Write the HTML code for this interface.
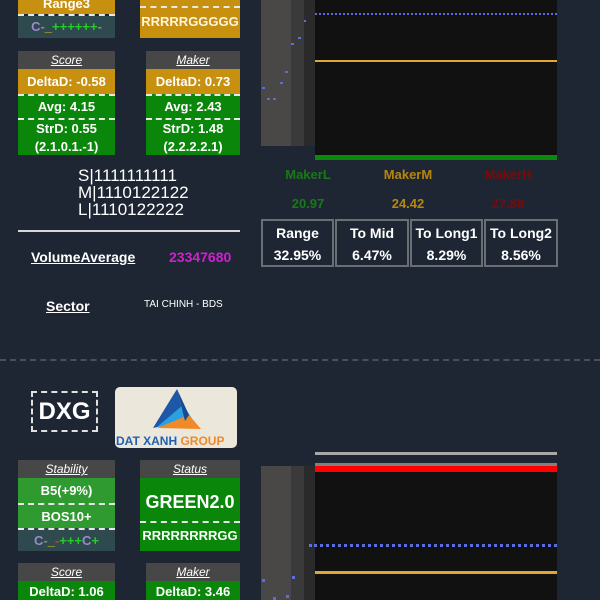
<!DOCTYPE html>
<html><head><meta charset="utf-8"><style>
*{margin:0;padding:0;box-sizing:border-box}
html,body{width:600px;height:600px;overflow:hidden}
body{background:#1f2633;font-family:"Liberation Sans",Arial,sans-serif;color:#fff;position:relative}
.a{position:absolute}
.c{position:absolute;text-align:center;font-weight:bold;font-size:13px;color:#fff}
.hd{background:#474747;font-style:italic;text-decoration:underline;height:18px;line-height:18px;font-size:12px;font-weight:normal}
.gold{background:#c8900f}
.gr{background:#0a870a}
.lg{background:#2f9a2f}
.tl{background:#2f4a4e}
.dash{border-top:2px dashed #e8e8e8}
.cell{position:absolute;top:219px;height:48px;border:2px solid #6a6e75;text-align:center;font-weight:bold;font-size:14px;line-height:22px;padding-top:1px}
</style></head><body>

<div class="c gold" style="left:18px;top:0;width:97px;height:14px;line-height:8px">Range3</div>
<div class="a dash" style="left:18px;top:14px;width:97px"></div>
<div class="c tl" style="left:18px;top:16px;width:97px;height:22px;line-height:22px"><span style="color:#9a8ac8">C</span><span style="color:#888">-</span><span style="color:#e0c020">_</span><span style="color:#20d020">++++++</span><span style="color:#888">-</span></div>

<div class="c gold" style="left:140px;top:0;width:100px;height:38px;line-height:44px;color:#fff5e0">RRRRRGGGGG</div>
<div class="a dash" style="left:140px;top:6px;width:100px"></div>

<div class="c" style="left:18px;top:51px;width:97px;height:102px">
<div class="hd">Score</div>
<div class="gold" style="height:25px;line-height:25px">DeltaD: -0.58</div>
<div class="gr dash" style="height:24px;line-height:22px">Avg: 4.15</div>
<div class="gr dash" style="height:37px;line-height:18px">StrD: 0.55<br>(2.1.0.1.-1)</div>
</div>
<div class="c" style="left:146px;top:51px;width:94px;height:102px">
<div class="hd">Maker</div>
<div class="gold" style="height:25px;line-height:25px">DeltaD: 0.73</div>
<div class="gr dash" style="height:24px;line-height:22px">Avg: 2.43</div>
<div class="gr dash" style="height:37px;line-height:18px">StrD: 1.48<br>(2.2.2.2.1)</div>
</div>

<div class="a" style="left:78px;top:167px;font-size:17px;line-height:17px">S|1111111111<br>M|1110122122<br>L|1110122222</div>
<div class="a" style="left:18px;top:230px;width:222px;height:2px;background:#d8d8d8"></div>
<div class="a" style="left:31px;top:249px;font-size:14px;font-weight:bold;text-decoration:underline">VolumeAverage</div>
<div class="a" style="left:169px;top:249px;font-size:14px;font-weight:bold;color:#d020d0">23347680</div>
<div class="a" style="left:46px;top:298px;font-size:14px;font-weight:bold;text-decoration:underline">Sector</div>
<div class="a" style="left:144px;top:299px;font-size:10px">TAI CHINH - BDS</div>

<div class="a" style="left:261px;top:0;width:30px;height:146px;background:#4a4847"></div>
<div class="a" style="left:291px;top:0;width:13px;height:146px;background:#3a3a3a"></div>
<div class="a" style="left:304px;top:0;width:11px;height:146px;background:#2a2a2a"></div>
<div class="a" style="left:315px;top:0;width:242px;height:155px;background:#111"></div>
<div class="a" style="left:315px;top:13px;width:242px;border-top:2px dotted #5a6ee0"></div>
<div class="a" style="left:315px;top:60px;width:242px;height:2px;background:#e0a830"></div>
<div class="a" style="left:315px;top:155px;width:242px;height:5px;background:#0a8a0a"></div>
<div class="a" style="left:262px;top:87px;width:3px;height:2px;background:#5a6ee0"></div>
<div class="a" style="left:267px;top:98px;width:3px;height:2px;background:#5a6ee0"></div>
<div class="a" style="left:273px;top:98px;width:3px;height:2px;background:#5a6ee0"></div>
<div class="a" style="left:280px;top:82px;width:3px;height:2px;background:#5a6ee0"></div>
<div class="a" style="left:285px;top:71px;width:3px;height:2px;background:#5a6ee0"></div>
<div class="a" style="left:291px;top:43px;width:3px;height:2px;background:#5a6ee0"></div>
<div class="a" style="left:298px;top:37px;width:3px;height:2px;background:#5a6ee0"></div>
<div class="a" style="left:304px;top:20px;width:2px;height:2px;background:#5a6ee0"></div>

<div class="c" style="left:268px;top:167px;width:80px;color:#167a16">MakerL</div>
<div class="c" style="left:368px;top:167px;width:80px;color:#b8860b">MakerM</div>
<div class="c" style="left:468px;top:167px;width:80px;color:#7a0a0a">MakerH</div>
<div class="c" style="left:268px;top:196px;width:80px;color:#167a16">20.97</div>
<div class="c" style="left:368px;top:196px;width:80px;color:#b8860b">24.42</div>
<div class="c" style="left:468px;top:196px;width:80px;color:#7a0a0a">27.88</div>

<div class="cell" style="left:261px;width:73px">Range<br>32.95%</div>
<div class="cell" style="left:335px;width:74px">To Mid<br>6.47%</div>
<div class="cell" style="left:410px;width:73px">To Long1<br>8.29%</div>
<div class="cell" style="left:484px;width:74px">To Long2<br>8.56%</div>

<div class="a" style="left:0;top:359px;width:600px;border-top:2px dashed #4a505a"></div>

<div class="a" style="left:31px;top:391px;width:67px;height:41px;border:2px dashed #e0e0e0;text-align:center;font-size:24px;font-weight:bold;line-height:37px">DXG</div>
<div class="a" style="left:115px;top:387px;width:122px;height:61px;background:#ebe7da;border-radius:5px;overflow:hidden">
<svg width="122" height="61" viewBox="0 0 122 61">
<polygon points="62,2 38,41 70,34" fill="#1c57a8"/>
<polygon points="68,18 42,40 78,33" fill="#2aa0e0"/>
<polygon points="74,28 42,41 86,42" fill="#f08a28"/>
<polygon points="62,2 70,34 74,28" fill="#1a4a90"/>
<text x="1" y="58" font-family="Liberation Sans" font-weight="bold" font-size="12" fill="#2060b0">DAT XANH <tspan fill="#f08a28">GROUP</tspan></text>
</svg></div>

<div class="c" style="left:18px;top:460px;width:97px;height:91px">
<div class="hd">Stability</div>
<div class="lg" style="height:25px;line-height:25px">B5(+9%)</div>
<div class="lg dash" style="height:25px;line-height:23px">BOS10+</div>
<div class="tl dash" style="height:23px;line-height:21px"><span style="color:#9a8ac8">C</span><span style="color:#888">-</span><span style="color:#e0c020">_</span><span style="color:#e03030">-</span><span style="color:#20d020">+++</span><span style="color:#9a8ac8">C</span><span style="color:#20d020">+</span></div>
</div>
<div class="c" style="left:140px;top:460px;width:100px;height:91px">
<div class="hd">Status</div>
<div class="gr" style="height:43px;line-height:48px;font-size:18px">GREEN2.0</div>
<div class="gr dash" style="height:30px;line-height:26px">RRRRRRRRGG</div>
</div>
<div class="c" style="left:18px;top:563px;width:97px;height:37px">
<div class="hd">Score</div>
<div class="gr" style="height:19px;line-height:22px">DeltaD: 1.06</div>
</div>
<div class="c" style="left:146px;top:563px;width:94px;height:37px">
<div class="hd">Maker</div>
<div class="gr" style="height:19px;line-height:22px">DeltaD: 3.46</div>
</div>

<div class="a" style="left:261px;top:466px;width:30px;height:134px;background:#4a4847"></div>
<div class="a" style="left:291px;top:466px;width:13px;height:134px;background:#3a3a3a"></div>
<div class="a" style="left:304px;top:466px;width:11px;height:134px;background:#2a2a2a"></div>
<div class="a" style="left:315px;top:463px;width:242px;height:137px;background:#111"></div>
<div class="a" style="left:315px;top:452px;width:242px;height:3px;background:#a8a8a8"></div>
<div class="a" style="left:315px;top:463px;width:242px;height:3px;background:#808080"></div>
<div class="a" style="left:315px;top:466px;width:242px;height:6px;background:#f00"></div>
<div class="a" style="left:309px;top:544px;width:248px;border-top:3px dotted #5a6ee0"></div>
<div class="a" style="left:315px;top:571px;width:242px;height:3px;background:#e0a830"></div>
<div class="a" style="left:262px;top:579px;width:3px;height:3px;background:#5a6ee0"></div>
<div class="a" style="left:292px;top:576px;width:3px;height:3px;background:#5a6ee0"></div>
<div class="a" style="left:286px;top:595px;width:3px;height:3px;background:#5a6ee0"></div>
<div class="a" style="left:273px;top:597px;width:3px;height:3px;background:#5a6ee0"></div>
</body></html>
